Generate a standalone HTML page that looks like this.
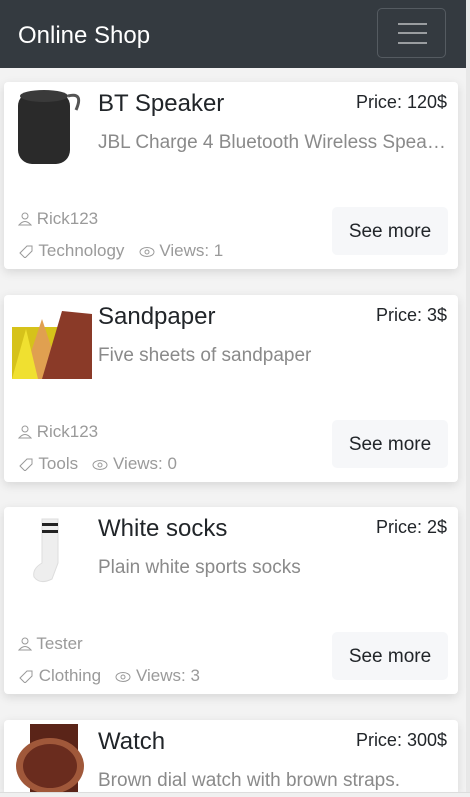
<!DOCTYPE html>
<html style="width:470px;height:797px;overflow:hidden"><head><style>
*{box-sizing:border-box;margin:0;padding:0}
body{width:470px;height:797px;overflow:hidden;background:#f3f3f3;font-family:"Liberation Sans",sans-serif;position:relative}
.nav{position:absolute;left:0;top:0;width:466px;height:68px;background:#343a40}
.brand{position:absolute;left:18px;top:22px;color:#fff;font-size:24px}
.tog{position:absolute;left:377px;top:8px;width:69px;height:50px;border:1px solid #555b61;border-radius:5px}
.tog i{position:absolute;left:20px;width:29px;height:2px;background:#9a9da0}
.sb{position:absolute;right:0;top:0;width:4px;height:797px;background:#e8e8e8}
.card{position:absolute;left:4px;width:454px;height:187px;background:#fff;border-radius:4px;box-shadow:0 3px 10px rgba(0,0,0,.12);overflow:hidden}
.img{position:absolute;left:8px;top:4px;width:80px;height:80px}
.t{position:absolute;left:94px;top:8px;font-size:24px;color:#212529}
.p{position:absolute;right:11px;top:10px;font-size:18px;color:#212529}
.d{position:absolute;left:94px;top:50px;font-size:19px;color:#8a8a8a;white-space:nowrap;width:352px;overflow:hidden;text-overflow:ellipsis}
.m{position:absolute;left:14px;font-size:17px;color:#9a9a9a;white-space:nowrap}
.btn{position:absolute;right:10px;top:125px;width:116px;height:48px;background:#f6f7f9;border-radius:5px;font-size:19px;color:#212529;text-align:center;line-height:50px}
svg{vertical-align:-2px}
</style></head><body>
<div class="nav"><div class="brand">Online Shop</div><div class="tog"><i style="top:14px"></i><i style="top:23px"></i><i style="top:33px"></i></div></div>
<div class="sb"></div>

<div class="card" style="top:82px">
<div class="img"><svg width="80" height="80"><rect x="6" y="6" width="52" height="72" rx="14" fill="#2a2a2a"/><ellipse cx="32" cy="10" rx="24" ry="6" fill="#3a3a3a"/><path d="M56 10 q16 -4 8 14" stroke="#555" stroke-width="3" fill="none"/></svg></div>
<div class="t">BT Speaker</div><div class="p">Price: 120$</div>
<div class="d">JBL Charge 4 Bluetooth Wireless Speaker</div>
<div class="m" style="top:127px"><svg width="14" height="14" viewBox="0 0 14 14"><circle cx="7" cy="4" r="3" fill="none" stroke="#999"/><path d="M1 13 q6-7 12 0z" fill="none" stroke="#999"/></svg> Rick123</div>
<div class="m" style="top:159px"><svg width="16" height="14" viewBox="0 0 16 14"><path d="M2 9 L9 2 H14 V7 L7 14 Z" fill="none" stroke="#999"/></svg> Technology &nbsp;&nbsp;<svg width="16" height="12" viewBox="0 0 16 12"><ellipse cx="8" cy="6" rx="7" ry="4.5" fill="none" stroke="#999"/><circle cx="8" cy="6" r="2" fill="none" stroke="#999"/></svg> Views: 1</div>
<div class="btn">See more</div></div>

<div class="card" style="top:295px">
<div class="img"><svg width="80" height="80"><rect x="0" y="28" width="80" height="52" fill="#d6c21a"/><path d="M10 80 L30 20 L50 80Z" fill="#e0a050"/><path d="M30 80 L50 12 L80 15 L80 80Z" fill="#8a3a28"/><path d="M0 80 L14 30 L26 80Z" fill="#f0e030"/></svg></div>
<div class="t">Sandpaper</div><div class="p">Price: 3$</div>
<div class="d">Five sheets of sandpaper</div>
<div class="m" style="top:127px"><svg width="14" height="14" viewBox="0 0 14 14"><circle cx="7" cy="4" r="3" fill="none" stroke="#999"/><path d="M1 13 q6-7 12 0z" fill="none" stroke="#999"/></svg> Rick123</div>
<div class="m" style="top:159px"><svg width="16" height="14" viewBox="0 0 16 14"><path d="M2 9 L9 2 H14 V7 L7 14 Z" fill="none" stroke="#999"/></svg> Tools &nbsp;&nbsp;<svg width="16" height="12" viewBox="0 0 16 12"><ellipse cx="8" cy="6" rx="7" ry="4.5" fill="none" stroke="#999"/><circle cx="8" cy="6" r="2" fill="none" stroke="#999"/></svg> Views: 0</div>
<div class="btn">See more</div></div>

<div class="card" style="top:507px">
<div class="img"><svg width="80" height="80"><path d="M30 8 H46 V52 L40 68 Q28 74 22 66 Q20 58 30 52Z" fill="#eee" stroke="#ddd"/><rect x="30" y="12" width="16" height="3" fill="#222"/><rect x="30" y="19" width="16" height="3" fill="#222"/></svg></div>
<div class="t">White socks</div><div class="p">Price: 2$</div>
<div class="d">Plain white sports socks</div>
<div class="m" style="top:127px"><svg width="14" height="14" viewBox="0 0 14 14"><circle cx="7" cy="4" r="3" fill="none" stroke="#999"/><path d="M1 13 q6-7 12 0z" fill="none" stroke="#999"/></svg> Tester</div>
<div class="m" style="top:159px"><svg width="16" height="14" viewBox="0 0 16 14"><path d="M2 9 L9 2 H14 V7 L7 14 Z" fill="none" stroke="#999"/></svg> Clothing &nbsp;&nbsp;<svg width="16" height="12" viewBox="0 0 16 12"><ellipse cx="8" cy="6" rx="7" ry="4.5" fill="none" stroke="#999"/><circle cx="8" cy="6" r="2" fill="none" stroke="#999"/></svg> Views: 3</div>
<div class="btn">See more</div></div>

<div class="card" style="top:720px;height:72px;border-radius:4px 4px 0 0">
<div class="img"><svg width="80" height="80"><rect x="18" y="0" width="48" height="80" fill="#5a2418"/><ellipse cx="38" cy="42" rx="34" ry="28" fill="#a0583a"/><ellipse cx="38" cy="42" rx="27" ry="22" fill="#6a2c1e"/></svg></div>
<div class="t">Watch</div><div class="p">Price: 300$</div>
<div class="d">Brown dial watch with brown straps.</div>
</div>
<div style="position:absolute;left:0;top:792px;width:470px;height:5px;background:#f0f0f0;border-top:1px solid #ddd"></div>
</body></html>
